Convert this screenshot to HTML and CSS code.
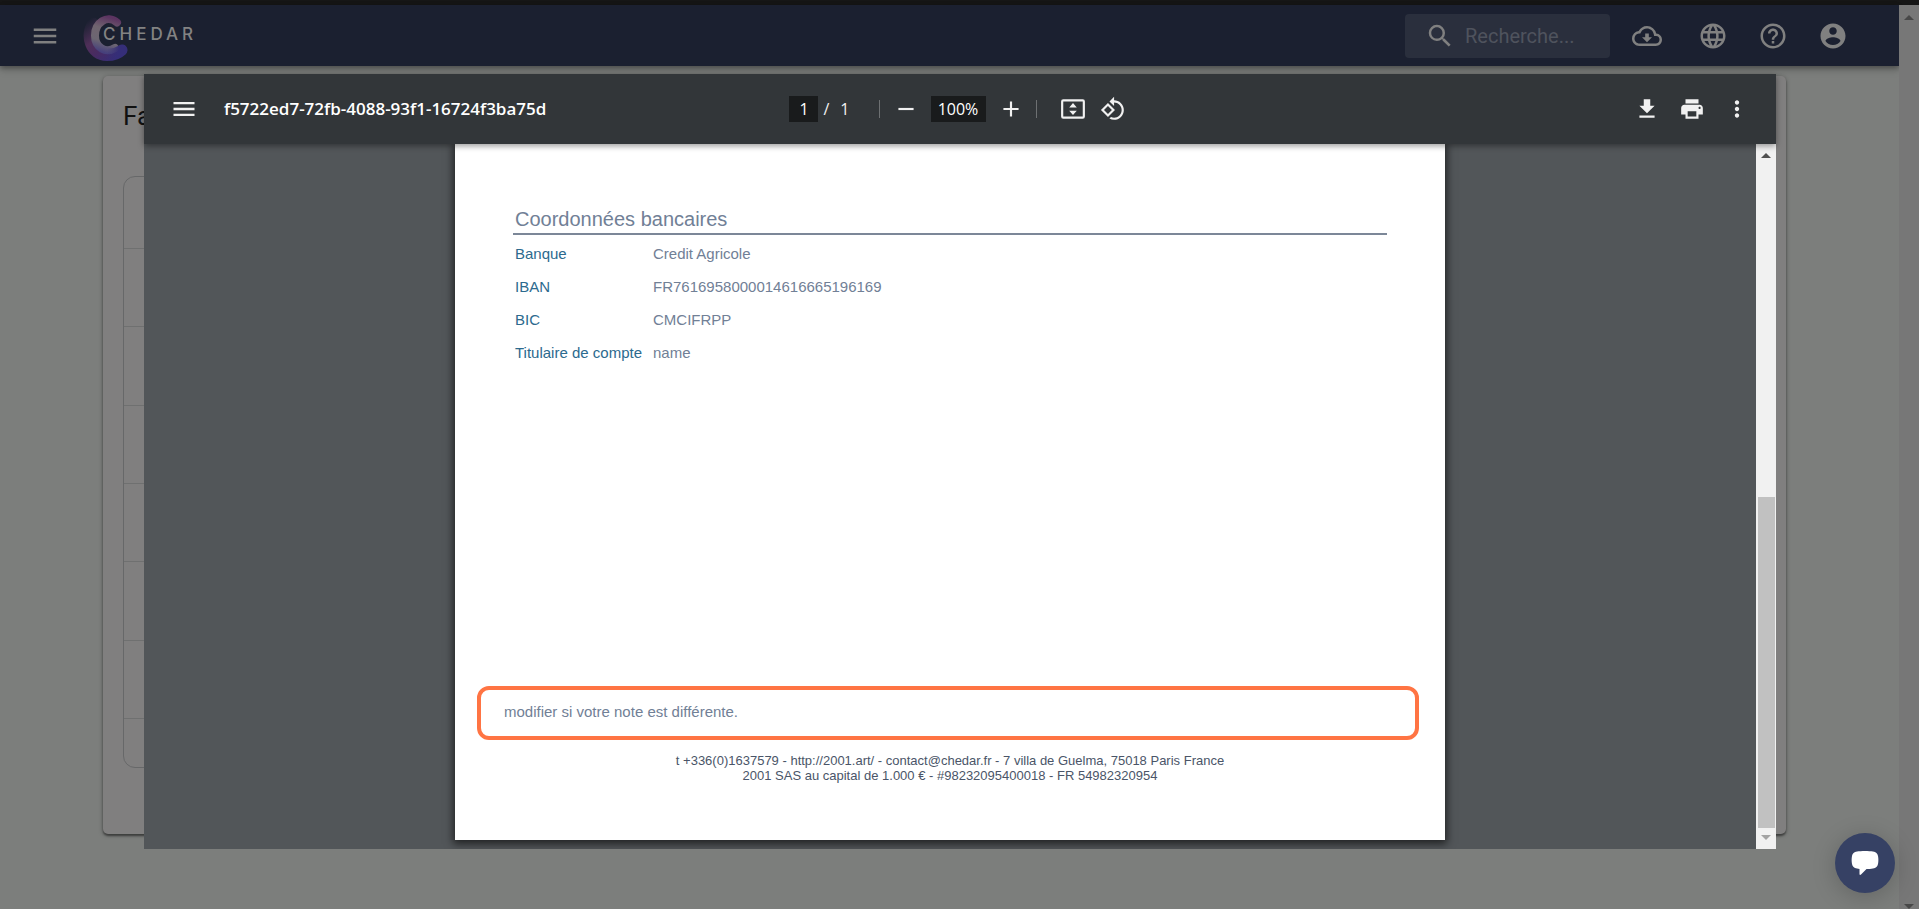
FILE: index.html
```html
<!DOCTYPE html>
<html lang="fr">
<head>
<meta charset="utf-8">
<title>Chedar</title>
<link rel="stylesheet" href="styles.css">
</head>
<body>
<div class="window-edge"></div>
<div class="window">
  <div class="app">
    <header class="app-bar">
      <button class="icon-button" type="button" aria-label="Menu">
        <svg class="icon" viewBox="0 0 24 24"><path d="M3 18h18v-2H3v2zm0-5h18v-2H3v2zm0-7v2h18V6H3z"/></svg>
      </button>
      <a class="brand" href="#">
        <svg class="brand-mark" viewBox="0 0 46 48">
          <defs>
            <linearGradient id="outer" gradientUnits="userSpaceOnUse" x1="8" y1="4" x2="38" y2="42">
              <stop offset="0" stop-color="#4c3159" stop-opacity="0"/>
              <stop offset=".4" stop-color="#4f2f58"/>
              <stop offset=".65" stop-color="#482b62"/>
              <stop offset="1" stop-color="#352e78"/>
            </linearGradient>
            <linearGradient id="inner" gradientUnits="userSpaceOnUse" x1="36" y1="6" x2="26" y2="40">
              <stop offset="0" stop-color="#5c3461"/>
              <stop offset=".35" stop-color="#70646f"/>
              <stop offset=".7" stop-color="#6c6672"/>
              <stop offset="1" stop-color="#46407c"/>
            </linearGradient>
            <linearGradient id="tail" gradientUnits="userSpaceOnUse" x1="24" y1="36" x2="36" y2="36">
              <stop offset="0" stop-color="#352e78" stop-opacity="0"/>
              <stop offset="1" stop-color="#352e78"/>
            </linearGradient>
          </defs>
          <g fill="none" stroke-linecap="round">
            <path d="M10 9C2 22 7 41 24 41.500C31 41.500 36 39 38.500 36.500" stroke="url(#outer)" stroke-width="11"/>
            <path d="M34 8.500C24 0 12 9 12 21.500C12 34 23 39.500 32 34" stroke="url(#inner)" stroke-width="8"/>
            <path d="M26 40C31 40 36 38 39 36" stroke="url(#tail)" stroke-width="11"/>
          </g>
        </svg>
        <span class="brand-name">CHEDAR</span>
      </a>
      <label class="search">
        <svg class="icon" viewBox="0 0 24 24"><path d="M15.500 14h-.79l-.28-.27A6.470 6.470 0 0 0 16 9.500 6.500 6.500 0 1 0 9.500 16c1.610 0 3.090-.59 4.230-1.570l.27.28v.79l5 4.990L20.490 19l-4.990-5zm-6 0C7.010 14 5 11.990 5 9.500S7.010 5 9.500 5 14 7.010 14 9.500 11.990 14 9.500 14z"/></svg>
        <input class="search-input" type="text" placeholder="Recherche..." aria-label="Recherche">
      </label>
      <button class="icon-button cloud" type="button" aria-label="Télécharger">
        <svg class="icon" viewBox="0 0 24 24"><path d="M19.350 10.040A7.490 7.490 0 0 0 12 4C9.110 4 6.600 5.640 5.350 8.040A5.994 5.994 0 0 0 0 14c0 3.310 2.690 6 6 6h13c2.760 0 5-2.240 5-5 0-2.640-2.050-4.780-4.650-4.960zM19 18H6c-2.210 0-4-1.790-4-4 0-2.050 1.530-3.760 3.560-3.970l1.070-.11.5-.95A5.469 5.469 0 0 1 12 6c2.620 0 4.880 1.860 5.390 4.430l.3 1.500 1.530.11A2.980 2.980 0 0 1 22 15c0 1.650-1.350 3-3 3zm-5.550-8h-2.900v3H8l4 4 4-4h-2.550z"/></svg>
      </button>
      <div class="app-actions">
        <button class="icon-button" type="button" aria-label="Langue">
          <svg class="icon" viewBox="0 0 24 24"><path d="M11.990 2C6.470 2 2 6.480 2 12s4.470 10 9.990 10C17.520 22 22 17.520 22 12S17.520 2 11.990 2zm6.930 6h-2.950c-.32-1.250-.78-2.450-1.380-3.560 1.840.63 3.370 1.910 4.330 3.560zM12 4.040c.83 1.200 1.480 2.530 1.910 3.960h-3.820c.43-1.430 1.080-2.760 1.910-3.960zM4.260 14C4.100 13.360 4 12.690 4 12s.1-1.360.26-2h3.380c-.08.66-.14 1.320-.14 2 0 .68.06 1.340.14 2H4.260zm.82 2h2.950c.32 1.250.78 2.450 1.380 3.560-1.840-.63-3.370-1.900-4.330-3.560zm2.950-8H5.080c.96-1.660 2.490-2.930 4.330-3.560C8.810 5.550 8.350 6.750 8.030 8zM12 19.960c-.83-1.200-1.480-2.530-1.910-3.960h3.820c-.43 1.430-1.080 2.760-1.910 3.960zM14.340 14H9.660c-.09-.66-.16-1.320-.16-2 0-.68.07-1.350.16-2h4.680c.09.65.16 1.320.16 2 0 .68-.07 1.340-.16 2zm.25 5.560c.6-1.110 1.060-2.310 1.380-3.560h2.950c-.96 1.650-2.490 2.930-4.330 3.560zM16.360 14c.08-.66.14-1.320.14-2 0-.68-.06-1.340-.14-2h3.380c.16.64.26 1.310.26 2s-.1 1.360-.26 2h-3.380z"/></svg>
        </button>
        <button class="icon-button" type="button" aria-label="Aide">
          <svg class="icon" viewBox="0 0 24 24"><path d="M11 18h2v-2h-2v2zm1-16C6.480 2 2 6.480 2 12s4.480 10 10 10 10-4.480 10-10S17.520 2 12 2zm0 18c-4.410 0-8-3.590-8-8s3.590-8 8-8 8 3.590 8 8-3.590 8-8 8zm0-14c-2.210 0-4 1.790-4 4h2c0-1.100.9-2 2-2s2 .9 2 2c0 2-3 1.750-3 5h2c0-2.250 3-2.500 3-5 0-2.210-1.790-4-4-4z"/></svg>
        </button>
        <button class="icon-button" type="button" aria-label="Compte">
          <svg class="icon" viewBox="0 0 24 24"><path d="M12 2C6.480 2 2 6.480 2 12s4.480 10 10 10 10-4.480 10-10S17.520 2 12 2zm0 3c1.660 0 3 1.340 3 3s-1.340 3-3 3-3-1.340-3-3 1.340-3 3-3zm0 14.200c-2.500 0-4.710-1.280-6-3.220.03-1.990 4-3.080 6-3.080 1.990 0 5.970 1.090 6 3.080-1.290 1.940-3.500 3.220-6 3.220z"/></svg>
        </button>
      </div>
    </header>
    <main class="content">
      <section class="card">
        <h1 class="card-title">Factures</h1>
        <div class="list">
          <div class="list-row"></div><div class="list-row"></div><div class="list-row"></div><div class="list-row"></div>
          <div class="list-row"></div><div class="list-row"></div><div class="list-row"></div><div class="list-row"></div>
        </div>
      </section>
    </main>
  </div>
  <div class="window-scroll">
    <svg class="arrow" viewBox="0 0 10 5"><path d="M0 5 5 0l5 5z"/></svg>
    <svg class="arrow" viewBox="0 0 10 5"><path d="M0 0h10L5 5z"/></svg>
  </div>
</div>

<div class="viewer" role="dialog" aria-label="Document">
  <div class="toolbar">
    <div class="toolbar-start">
      <button class="tool menu-tool" type="button" aria-label="Panneau latéral">
        <svg class="icon" viewBox="0 0 24 24"><path d="M3 18h18v-2H3v2zm0-5h18v-2H3v2zm0-7v2h18V6H3z"/></svg>
      </button>
      <span class="file-name">f5722ed7-72fb-4088-93f1-16724f3ba75d</span>
    </div>
    <div class="toolbar-center">
      <input class="field page-field" type="text" value="1" aria-label="Page">
      <span class="slash">/</span>
      <span class="page-count">1</span>
      <span class="divider"></span>
      <button class="tool" type="button" aria-label="Zoom arrière">
        <svg class="icon" viewBox="0 0 24 24"><path d="M5 11h14v2H5z"/></svg>
      </button>
      <input class="field zoom-field" type="text" value="100%" aria-label="Zoom">
      <button class="tool" type="button" aria-label="Zoom avant">
        <svg class="icon" viewBox="0 0 24 24"><path d="M19 13h-6v6h-2v-6H5v-2h6V5h2v6h6v2z"/></svg>
      </button>
      <span class="divider"></span>
      <button class="tool fit-tool" type="button" aria-label="Ajuster à la page">
        <svg class="icon" viewBox="0 0 24 24"><path d="M3 3h18a2 2 0 0 1 2 2v14a2 2 0 0 1-2 2H3a2 2 0 0 1-2-2V5a2 2 0 0 1 2-2zm0 2v14h18V5zm9 1.500 3.500 4h-7zm0 11-3.500-4h7z"/></svg>
      </button>
      <button class="tool" type="button" aria-label="Rotation">
        <svg class="icon" viewBox="0 0 24 24"><path d="M7.340 6.410L.86 12.900l6.490 6.480 6.490-6.480-6.500-6.490zM3.690 12.900l3.660-3.660L11 12.900l-3.660 3.660-3.650-3.660zm15.670-6.260C17.610 4.880 15.300 4 13 4V.76L8.760 5 13 9.240V6c1.790 0 3.580.68 4.950 2.050 2.730 2.730 2.730 7.170 0 9.900C16.580 19.320 14.790 20 13 20c-.97 0-1.940-.21-2.840-.61l-1.490 1.490C10.020 21.620 11.510 22 13 22c2.300 0 4.610-.88 6.360-2.640 3.520-3.510 3.520-9.210 0-12.720z"/></svg>
      </button>
    </div>
    <div class="toolbar-end">
      <button class="tool" type="button" aria-label="Télécharger">
        <svg class="icon" viewBox="0 0 24 24"><path d="M19 9h-4V3H9v6H5l7 7 7-7zM5 18v2h14v-2H5z"/></svg>
      </button>
      <button class="tool" type="button" aria-label="Imprimer">
        <svg class="icon" viewBox="0 0 24 24"><path d="M19 8H5c-1.660 0-3 1.340-3 3v6h4v4h12v-4h4v-6c0-1.660-1.340-3-3-3zm-3 11H8v-5h8v5zm3-7c-.55 0-1-.45-1-1s.45-1 1-1 1 .45 1 1-.45 1-1 1zm-1-9H6v4h12V3z"/></svg>
      </button>
      <button class="tool" type="button" aria-label="Plus d'actions">
        <svg class="icon" viewBox="0 0 24 24"><path d="M12 8c1.100 0 2-.9 2-2s-.9-2-2-2-2 .9-2 2 .9 2 2 2zm0 2c-1.100 0-2 .9-2 2s.9 2 2 2 2-.9 2-2-.9-2-2-2zm0 6c-1.100 0-2 .9-2 2s.9 2 2 2 2-.9 2-2-.9-2-2-2z"/></svg>
      </button>
    </div>
  </div>
  <div class="viewport">
    <div class="desk">
      <article class="paper">
        <section class="bank">
          <h2 class="bank-title">Coordonnées bancaires</h2>
          <table class="bank-table">
            <tr><th scope="row">Banque</th><td>Credit Agricole</td></tr>
            <tr><th scope="row">IBAN</th><td>FR7616958000014616665196169</td></tr>
            <tr><th scope="row">BIC</th><td>CMCIFRPP</td></tr>
            <tr><th scope="row">Titulaire de compte</th><td>name</td></tr>
          </table>
        </section>
        <p class="note">modifier si votre note est différente.</p>
        <footer class="legal">t +336(0)1637579 - http://2001.art/ - contact@chedar.fr - 7 villa de Guelma, 75018 Paris France<br>2001 SAS au capital de 1.000 € - #98232095400018 - FR 54982320954</footer>
      </article>
    </div>
    <div class="scrollbar">
      <svg class="arrow" viewBox="0 0 10 5"><path d="M0 5 5 0l5 5z"/></svg>
      <div class="track"><div class="thumb"></div></div>
      <svg class="arrow arrow-off" viewBox="0 0 10 5"><path d="M0 0h10L5 5z"/></svg>
    </div>
  </div>
</div>

<button class="chat" type="button" aria-label="Discussion">
  <svg class="chat-icon" viewBox="0 0 28 26"><path d="M6 1.500C10 .7 18 .7 22 1.500c3 .5 4.500 2 5 4.500.5 3 .5 5 0 8-.5 2.500-2 4-5 4.500-2 .4-4.500.5-6.500.5L10 24.500c-.8.700-1.500.400-1.500-.5v-5L6 18.500C3 18 1.500 16.500 1 14 .5 11 .5 9 1 6c.5-2.500 2-4 5-4.500z"/></svg>
</button>
</body>
</html>
```
FILE: styles.css
```css
* { box-sizing: border-box; }

body {
  margin: 0;
  height: 100vh;
  display: flex;
  flex-direction: column;
  overflow: hidden;
  background: #7c7e7c;
  font-family: Roboto, "Liberation Sans", sans-serif;
}

button {
  padding: 0;
  border: 0;
  background: none;
  color: inherit;
}

.icon { display: block; width: 100%; height: 100%; fill: currentColor; }

.window-edge { height: 5px; background: #161616; }
.window { flex: 1; display: flex; min-height: 0; }
.app { flex: 1; display: flex; flex-direction: column; min-width: 0; }

.window-scroll {
  width: 20px;
  padding: 10px 5px 0;
  display: flex;
  flex-direction: column;
  justify-content: space-between;
  background: #777777;
  fill: #484848;
}
.arrow { display: block; width: 10px; height: 5px; }

/* App bar */
.app-bar {
  display: flex;
  align-items: center;
  height: 61px;
  padding: 0 51px 0 30px;
  background: #1b2030;
  color: #808080;
  box-shadow: 0 2px 5px rgba(0, 0, 0, .3), 0 4px 8px rgba(0, 0, 0, .15);
}
.icon-button { flex: none; width: 30px; height: 30px; }
.brand {
  position: relative;
  width: 120px;
  height: 48px;
  margin: 4px auto 0 23px;
  color: #838383;
  text-decoration: none;
}
.brand-mark { display: block; width: 46px; height: 48px; }
.brand-name {
  position: absolute;
  left: 20px;
  top: 10px;
  font: 500 17px/20px Inter, sans-serif;
  letter-spacing: 4px;
}
.search {
  display: flex;
  align-items: center;
  gap: 10px;
  width: 205px;
  height: 44px;
  padding: 0 20px;
  border-radius: 4px;
  background: #2a2f3d;
}
.search .icon { flex: none; width: 30px; height: 30px; }
.search-input {
  flex: 1;
  min-width: 0;
  padding: 0;
  border: 0;
  outline: 0;
  background: none;
  color: #808080;
  font: 20px/24px Roboto, sans-serif;
}
.search-input::placeholder { color: #4f535d; opacity: 1; }
.cloud { margin: 0 36px 0 22px; }
.app-actions { display: flex; gap: 30px; }

/* Page behind the viewer */
.content { flex: 1; display: flex; padding: 10px 113px 75px 103px; }
.card {
  flex: 1;
  display: flex;
  flex-direction: column;
  padding: 24px 20px 66px;
  border-radius: 5px;
  background: #807f7f;
  box-shadow: 0 2px 2px rgba(0, 0, 0, .4), 0 1px 5px rgba(0, 0, 0, .3);
}
.card-title {
  margin: 0 0 44px;
  color: #111111;
  font-size: 26px;
  font-weight: 400;
  line-height: 32px;
}
.list {
  flex: 1;
  display: grid;
  grid-template-rows: 71px repeat(6, 1fr) 49px;
  border: 1px solid #676869;
  border-radius: 12px;
}
.list-row + .list-row { border-top: 1px solid #6f7070; }

/* Document viewer */
.viewer {
  position: fixed;
  inset: 74px 143px 60px 144px;
  display: flex;
  flex-direction: column;
  background: #525659;
}
.toolbar {
  position: relative;
  z-index: 1;
  display: grid;
  grid-template-columns: 1fr auto 1fr;
  align-items: center;
  height: 70px;
  padding: 0 26px;
  background: #323639;
  color: #f1f1f1;
  font: 16px/24px "Open Sans", "Noto Sans", sans-serif;
  box-shadow: 0 2px 6px rgba(0, 0, 0, .4);
}
.toolbar-start,
.toolbar-center,
.toolbar-end { display: flex; align-items: center; }
.toolbar-start { gap: 26px; }
.toolbar-center { margin-right: 5px; }
.toolbar-end { justify-content: flex-end; gap: 19px; }
.tool { flex: none; width: 26px; height: 26px; }
.menu-tool { width: 28px; height: 28px; }
.fit-tool { margin: 0 14px 0 19px; }
.file-name { font-size: 17px; font-weight: 600; color: #ffffff; }
.field {
  height: 26px;
  padding: 0;
  border: 0;
  background: #191b1c;
  color: #ffffff;
  font: inherit;
  text-align: center;
}
.page-field { width: 29px; }
.slash { margin: 0 11px 0 5px; }
.page-count { margin-right: 29px; }
.divider { width: 1px; height: 18px; background: #6d7072; }
.divider + .tool { margin-left: 13px; }
.divider + .fit-tool { margin-left: 23px; }
.zoom-field { width: 55px; margin: 0 12px; }
.zoom-field + .tool { margin-right: 12px; }

.viewport { flex: 1; display: flex; min-height: 0; }
.desk {
  flex: 1;
  display: flex;
  justify-content: center;
  padding-bottom: 9px;
  overflow: hidden;
}
.paper {
  flex: 0 1 990px;
  display: flex;
  flex-direction: column;
  padding: 63px 26px 57px 22px;
  background: #ffffff;
  color: #718096;
  font: 15px/18px "Liberation Sans", Arial, sans-serif;
  box-shadow: 0 2px 8px 2px rgba(0, 0, 0, .6);
}
.bank { margin: 0 32px 0 36px; }
.bank-title {
  margin: 0;
  padding: 0 2px 2px;
  border-bottom: 2px solid #7c8798;
  font-size: 20px;
  font-weight: 400;
  line-height: 24px;
}
.bank-table { margin-top: 2px; border-collapse: collapse; }
.bank-table th,
.bank-table td { height: 33px; padding: 0 2px; font-weight: 400; text-align: left; }
.bank-table th { width: 138px; color: #2c6a8e; white-space: nowrap; }
.note {
  margin: auto 0 13px;
  padding: 13px 23px 15px;
  border: 4px solid #ff7443;
  border-radius: 12px;
}
.legal {
  margin-right: -4px;
  color: #4a5568;
  font-size: 13px;
  line-height: 15px;
  text-align: center;
}

.scrollbar {
  display: flex;
  flex-direction: column;
  align-items: center;
  width: 20px;
  padding: 9px 0;
  gap: 7px;
  background: #f1f1f1;
  fill: #505050;
}
.arrow-off { fill: #a3a3a3; }
.track {
  flex: 1;
  display: flex;
  flex-direction: column;
  justify-content: flex-end;
  width: 17px;
}
.thumb { height: 50%; background: #c1c1c1; }

.chat {
  position: fixed;
  right: 24px;
  bottom: 16px;
  display: grid;
  place-items: center;
  width: 60px;
  height: 60px;
  border-radius: 50%;
  background: #364164;
  box-shadow: 0 4px 24px rgba(0, 0, 0, .2);
}
.chat-icon { width: 28px; height: 26px; fill: #ffffff; }
```
